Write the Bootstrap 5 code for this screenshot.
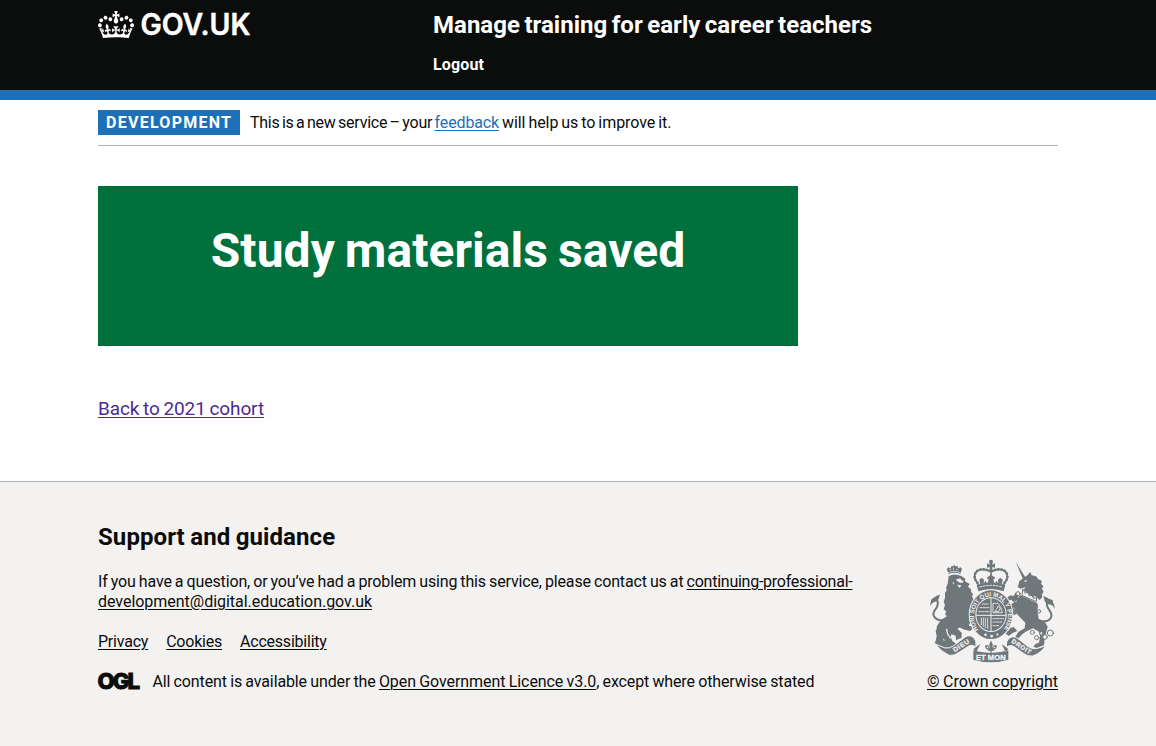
<!DOCTYPE html>
<html lang="en">
<head>
<meta charset="utf-8">
<meta name="viewport" content="width=device-width, initial-scale=1">
<title>Study materials saved</title>
<link href="https://cdn.jsdelivr.net/npm/bootstrap@5.3.0/dist/css/bootstrap.min.css" rel="stylesheet">
<style>
body{font-family:Roboto,"Liberation Sans",sans-serif;color:#0b0c0c;font-size:16px;line-height:20px;letter-spacing:-.15px;word-spacing:-.7px;background:#f3f2f1}
a{color:inherit;text-decoration-thickness:1px;text-underline-offset:2px}
a:hover{color:inherit;text-decoration-thickness:3px}
svg{overflow:visible}
.page-width{width:960px}
.site-header{background:#0b0c0c;border-bottom:10px solid #1d70b8;height:100px;color:#fff}
.logo-col{width:335px;padding-top:10px}
.service-name{font-size:24px;line-height:30px;font-weight:700;letter-spacing:.02px;word-spacing:-1.5px;padding-top:10px}
.logout{font-weight:700;letter-spacing:.13px;margin-top:15px}
.phase{height:46px;border-bottom:1px solid #b1b4b6}
.phase-tag{background:#1d70b8;color:#fff;width:142px;height:25px;line-height:25px;padding-left:8px;font-weight:700;letter-spacing:1.27px;margin-right:10px}
.phase-text{letter-spacing:-.25px;word-spacing:-1.25px;padding-top:1px}
.phase-text .tail{letter-spacing:-.05px;word-spacing:-.95px}
.phase-text a{color:#1d70b8;letter-spacing:-.15px}
.panel-done{background:#00703c;color:#fff;width:700px;height:160px;margin-top:40px;padding-top:40px}
.panel-done h1{font-size:48px;line-height:50px;font-weight:700;letter-spacing:.05px;word-spacing:-2px}
.back{font-size:19px;line-height:25px;color:#4c2c92;margin-top:50px;letter-spacing:-.12px;word-spacing:-.8px}
.main-area{height:481px}
.site-footer{border-top:1px solid #b1b4b6;height:265px;padding-top:40px}
.site-footer h2{font-size:24px;line-height:30px;font-weight:700;letter-spacing:.08px;word-spacing:-.6px}
.support{width:770px;margin-top:20px}
.licence{letter-spacing:-.12px;word-spacing:-.6px}
.licence a{letter-spacing:-.07px}
.crest{display:block}
.footer-col{width:131px}
</style>
</head>
<body>
<div class="main-area bg-white">
<header class="site-header">
  <div class="page-width mx-auto d-flex">
    <div class="logo-col">
      <svg class="d-block" width="156" height="32" viewBox="0 0 156 32" fill="#fff" role="img" aria-label="GOV.UK">
        <path transform="translate(0 1) scale(.2727 .282)" d="M25 30.2c3.5 1.5 7.7-.2 9.1-3.7 1.5-3.6-.2-7.8-3.9-9.2-3.6-1.4-7.6.3-9.1 3.9-1.4 3.5.3 7.5 3.9 9zM9 39.5c3.6 1.5 7.8-.2 9.2-3.7 1.5-3.6-.2-7.8-3.9-9.1-3.6-1.5-7.6.2-9.1 3.8-1.4 3.5.3 7.5 3.8 9zM4.4 57.2c3.5 1.5 7.7-.2 9.1-3.8 1.5-3.6-.2-7.7-3.9-9.1-3.5-1.5-7.6.3-9.1 3.8-1.4 3.5.3 7.6 3.9 9.1zm38.3-21.4c3.5 1.5 7.7-.2 9.1-3.8 1.5-3.6-.2-7.7-3.9-9.1-3.6-1.5-7.6.3-9.1 3.8-1.3 3.6.4 7.7 3.9 9.1zm64.4-5.6c-3.6 1.5-7.8-.2-9.1-3.7-1.5-3.6.2-7.8 3.8-9.2 3.6-1.4 7.7.3 9.2 3.9 1.3 3.5-.4 7.5-3.9 9zm15.9 9.3c-3.6 1.5-7.7-.2-9.1-3.7-1.5-3.6.2-7.8 3.7-9.1 3.6-1.5 7.7.2 9.2 3.8 1.5 3.5-.3 7.5-3.8 9zm4.7 17.7c-3.6 1.5-7.8-.2-9.2-3.8-1.5-3.6.2-7.7 3.9-9.1 3.6-1.5 7.7.3 9.2 3.8 1.3 3.5-.4 7.6-3.9 9.1zM89.3 35.8c-3.6 1.5-7.8-.2-9.2-3.8-1.4-3.6.2-7.7 3.9-9.1 3.6-1.5 7.7.3 9.2 3.8 1.4 3.6-.3 7.7-3.9 9.1zM69.7 17.7l8.9 4.7V9.3l-8.9 2.8c-.2-.3-.5-.6-.9-.9L72.4 0H59.6l3.5 11.2c-.3.3-.6.5-.9.9l-8.8-2.8v13.1l8.8-4.7c.3.3.6.7.9.9l-5 15.4v.1c-.2.8-.4 1.6-.4 2.4 0 4.1 3.1 7.5 7 8.1h.2c.3 0 .7.1 1 .1.4 0 .7 0 1-.1h.2c4-.6 7.1-4.1 7.1-8.1 0-.8-.1-1.7-.4-2.4V34l-5.1-15.4c.4-.2.7-.6 1-.9zM66 92.8c16.9 0 32.8 1.1 47.1 3.2 4-16.9 8.9-26.7 14-33.5l-9.6-3.4c1 4.9 1.1 7.2 0 10.2-1.5-1.4-3-4.3-4.2-8.7L108.6 76c2.8-2 5-3.2 7.5-3.3-4.4 9.4-10 11.9-13.6 11.2-4.3-.8-6.3-4.6-5.6-7.9 1-4.7 5.7-5.9 8-.5 4.3-8.7-3-11.4-7.6-8.8 7.1-7.2 7.9-13.5 2.1-21.1-8 6.1-8.1 12.3-4.5 20.8-4.7-5.4-12.1-2.5-9.5 6.2 3.4-5.2 7.9-2 7.2 3.1-.6 4.3-6.4 7.8-13.5 7.2-10.3-.9-10.9-8-11.2-13.8 2.5-.5 7.1 1.8 11 7.3L80.2 60c-4.1 4.4-8 5.3-12.3 5.4 1.4-4.4 8-11.6 8-11.6H55.5s6.4 7.2 7.9 11.6c-4.2-.1-8-1-12.3-5.4l1.4 16.4c3.9-5.5 8.5-7.7 10.9-7.3-.3 5.8-.9 12.8-11.1 13.8-7.2.6-12.9-2.9-13.5-7.2-.7-5 3.8-8.3 7.1-3.1 2.7-8.7-4.6-11.6-9.4-6.2 3.7-8.5 3.6-14.7-4.6-20.8-5.8 7.6-5 13.9 2.2 21.1-4.7-2.6-11.9.1-7.7 8.8 2.3-5.5 7.1-4.2 8.1.5.7 3.3-1.3 7.1-5.7 7.9-3.5.7-9-1.8-13.5-11.2 2.5.1 4.7 1.3 7.5 3.3l-4.7-15.4c-1.2 4.4-2.7 7.2-4.3 8.7-1.1-3-.9-5.3 0-10.2l-9.5 3.4c5 6.9 9.9 16.7 14 33.5 14.8-2.1 30.8-3.2 47.7-3.2z"/>
        <text x="42.500" y="25.200" font-family="Inter, sans-serif" font-size="29.500" font-weight="600" stroke="#fff" stroke-width=".5" letter-spacing="0" textLength="110" lengthAdjust="spacingAndGlyphs">GOV.UK</text>
      </svg>
    </div>
    <div>
      <div class="service-name">Manage training for early career teachers</div>
      <div class="logout">Logout</div>
    </div>
  </div>
</header>
<main class="page-width mx-auto">
  <div class="phase d-flex align-items-center">
    <strong class="phase-tag">DEVELOPMENT</strong>
    <span class="phase-text">This is a new service – your <a href="#">feedback</a><span class="tail"> will help us to improve it.</span></span>
  </div>
  <div class="panel-done text-center"><h1 class="m-0">Study materials saved</h1></div>
  <p class="back mb-0"><a href="#">Back to 2021 cohort</a></p>
</main>
</div>
<footer class="site-footer">
  <div class="page-width mx-auto d-flex justify-content-between">
    <div>
      <h2 class="m-0">Support and guidance</h2>
      <p class="support mb-0">If you have a question, or you’ve had a problem using this service, please contact us at <a href="#"><span style="letter-spacing:-.25px">continuing-professional-</span><br><span style="letter-spacing:-.03px">development@digital.education.gov.uk</span></a></p>
      <div class="d-flex mt-3 pt-1" style="gap:18px;letter-spacing:-.22px"><a href="#">Privacy</a><a href="#">Cookies</a><a href="#">Accessibility</a></div>
      <div class="d-flex mt-3 pt-1">
        <svg width="41" height="20" viewBox="0 0 41 20" role="img" aria-label="OGL" style="margin-right:13.5px"><text x="-.5" y="16.500" font-family="Inter, sans-serif" font-size="22" font-weight="800" fill="#0b0c0c" stroke="#0b0c0c" stroke-width=".9" letter-spacing="-2" word-spacing="0" textLength="40.500" lengthAdjust="spacingAndGlyphs">OGL</text></svg>
        <span class="licence">All content is available under the <a href="#">Open Government Licence v3.0</a>, except where otherwise stated</span>
      </div>
    </div>
    <div class="footer-col">
      <svg class="crest" width="125" height="102" viewBox="30 30 375 306" style="margin:38px 0 10px 3px" fill="#6f777b" stroke="#6f777b" stroke-width="0" stroke-linejoin="round" stroke-linecap="round">
        <!-- lion -->
        <path d="M86 72l-6-15 5-5 7 3 2-7 6 1 2-5 5 5 6-1 2 7 7-3 4 5-5 15q-17-8-35 0z"/>
        <path fill="none" stroke="#f3f2f1" stroke-width="2" d="M85 68q18-9 36 0M89 58h4M100 54v5M110 58h4"/>
        <path d="M86 78q18-9 38 0l12 8-1 8 14 8-5 8 9 8 1 9 5 5-3 8 5 8-4 14-6 7 6 8-4 8-3 15 6 10-8 12-2 13-12-4-4-10-10 11-14 8-10 8-4 12 5 13 13 9-9 12-14 3-15-10-2-9 4-8-8-8-7 2 0-10 9-10-5-7-6 6-6-6 2-12 10-4 8-12 10-10-6-6 4-8-8-8 4-12-4-10 4-12 0-14 5-8-2-8 5-12z"/>
        <path d="M86 196l-20 12-10 12-7 14 8 5 15-14 20-11zM53 228l-6 16 3 14-3 14-3 8 14 14 20 0 6-10-12-9-4-14 6-14 14-12zM83 238l12 15 12 4 1 14 17-8 0-15-12-11zM118 214l20 13 16 2 4 8-8 6-16-4-18-8z"/>
        <path fill="none" stroke="#f3f2f1" stroke-width="4" d="M80 238l3 14 8 12"/>
        <path fill="none" stroke-width="6" d="M76 208q-22 8-34-9c-10-18 16-21 11-44-3-13-11-11-17-4"/>
        <path d="M31 168q-1-15 8-22 9-11 21-12-3 13-9 20l-9 2q-8 4-11 12z"/>
        <path fill="#f3f2f1" d="M107 89l13-4 5 6 6 3-4 5-10-2zM111 104l13 2-5 8zM98 96l5 3-4 4z"/>
        <!-- central crown -->
        <circle cx="213" cy="35" r="6"/><path d="M209 38h8v9h-8zM201 40l8 4h8l8-4v14l-8-4h-8l-8 4zM209 50h8v15h-8z"/>
        <path fill="none" stroke-width="8" stroke-dasharray="1 9" d="M211 64c-23-12-46-5-47 14-1 12 7 17 12 27M215 64c23-12 46-5 47 14 1 12-7 17-12 27"/>
        <path fill="none" stroke-width="5" d="M211 64c-23-12-46-5-47 14-1 12 7 17 12 27M215 64c23-12 46-5 47 14 1 12-7 17-12 27"/>
        <path fill="none" stroke-width="6" stroke-dasharray="1 7" d="M213 64v24"/>
        <path d="M170 105q43-14 86 0l-5 19q-38-12-76 0zM180 102l-2-13 7-6 7 6-1 11zM246 102l2-13-7-6-7 6 1 11zM202 99l4-10-6-6 13-9 13 9-6 6 4 10zM190 103l6-11 6 10zM224 102l6-10 6 11z"/>
        <path fill="none" stroke="#f3f2f1" stroke-width="3" stroke-dasharray="5 5" d="M180 111q33-10 67 0"/>
        <!-- unicorn -->
        <path d="M287 36l30 47-8 5z"/>
        <path d="M298 93l14-10 10-7 9-10 4 10 13 3 7 9 11 5-3 8 7 8-4 7 5 9-5 8 1 9-8 8-13-12-8 3-27-20 5-9-14 4-9-5 3-9z"/>
        <path fill="#f3f2f1" d="M313 92l7-2 0 4-6 2z"/>
        <path fill="none" stroke-width="3" d="M309 118l7 12 7-6 5 14 9-4 3 12 10-4-1 13-42-18z"/>
        <path d="M296 134l-3 16-12 6-8-7-10 5-2-10 9-8 11 2 5-10 10-2zM300 135l18 8 34 17 2 8-2 14 4 24 19 11 8 13-4 16-5 20-2 20-22 8-10-4 7-9 10-3 3-19-3-14-18-10-22 10-12 9-12 14-9-4 11-18 19-11 2-17-17-17-16-19-1-14z"/>
        <path d="M286 154l-18 14 4 18 9 10 10-5-7-9-4-8 16-8zM281 231l-18 5-7 14 10 8 12-9 14-6z"/>
        <path fill="none" stroke-width="6" d="M360 212q26 6 33-10c8-18-16-24-12-43 2-12 8-10 15-6"/>
        <path d="M404 177q0-17-9-24-8-9-24-15 0 15 10 24l12 2q7 3 11 13z"/>
        <g fill="#f3f2f1" stroke-width="3"><circle cx="294" cy="131" r="6"/><circle cx="357" cy="184" r="5"/><circle cx="337" cy="247" r="6"/><circle cx="350" cy="263" r="6"/><circle cx="364" cy="250" r="5"/><circle cx="375" cy="261" r="7"/><circle cx="391" cy="249" r="9"/></g>
        <!-- garter and quartered shield -->
        <ellipse cx="213" cy="194" rx="67" ry="76" fill="#f3f2f1"/>
        <ellipse cx="213" cy="194" rx="64" ry="73"/>
        <ellipse cx="213" cy="194" rx="47" ry="52" fill="#f3f2f1"/>
        <ellipse cx="213" cy="194" rx="44" ry="49"/>
        <g fill="none" stroke="#f3f2f1" stroke-width="3"><path d="M213 146v96M169 196h88"/><path stroke-width="2.500" stroke-dasharray="7 3" d="M187 162h20M180 173h28M176 185h32M219 206h32M219 216h26M219 227h20"/><path stroke-width="2.500" d="M220 160h14q10 10 13 28h-27zM225 184l6-8 3-8 7 6-4 9zM184 204v20M190 204v25M196 204v29M203 204v32"/></g>
        <path id="garterLine" fill="none" stroke="none" d="M176 239A51 59 0 1 1 250 239"/>
        <text fill="#f3f2f1" stroke="none" font-family="Liberation Sans, sans-serif" font-weight="700" font-size="19" letter-spacing="0" word-spacing="0"><textPath href="#garterLine" textLength="258" lengthAdjust="spacingAndGlyphs">HONI SOIT QUI MAL Y PENSE</textPath></text>
        <path fill="#f3f2f1" d="M193 253l4-3 4 4-3 4-5-1zM211 256l5-2 4 4-4 5-5-2zM229 252l5-2 2 5-5 2z"/>
        <!-- motto ribbon -->
        <path stroke="#f3f2f1" stroke-width="3" d="M46 282l29 12q14 2 26-7l35-26q13-8 25 2 9 8 7 28-14-10-25-1l-26 17q-14 11-29 9-24-10-42-34zM378 287l-29 9q-14 2-26-7l-32-25q-13-8-25 2-9 8-7 26 14-10 25-1l25 18q14 12 29 9 24-8 40-31z"/>
        <path d="M160 301q53 16 105 0l0 28q-52 16-105 0zM160 297l21-15-12 23zM265 297l-20-15 11 23z"/>
        <path fill="none" stroke-width="4" d="M213 276v33M205 300h16M209 297q-13 1-11-10 8-2 13 12M217 297q13 1 11-10-8-2-13 12"/><path d="M213 274l6 10-6 11-6-11z"/>
        <g fill="#f3f2f1" stroke="#f3f2f1" stroke-width=".8" font-family="Liberation Sans, sans-serif" font-weight="700" font-size="20" letter-spacing="0" word-spacing="0"><text transform="translate(104 307) rotate(-33)" textLength="54">DIEU</text><text transform="translate(273 277) rotate(33)" font-size="19" textLength="66">DROIT</text><text x="168" y="329" textLength="89" lengthAdjust="spacingAndGlyphs">ET MON</text></g>
      </svg>
      <a href="#" style="letter-spacing:-.04px;word-spacing:-.4px">© Crown copyright</a>
    </div>
  </div>
</footer>
<script src="https://cdn.jsdelivr.net/npm/bootstrap@5.3.0/dist/js/bootstrap.bundle.min.js"></script>
</body>
</html>
